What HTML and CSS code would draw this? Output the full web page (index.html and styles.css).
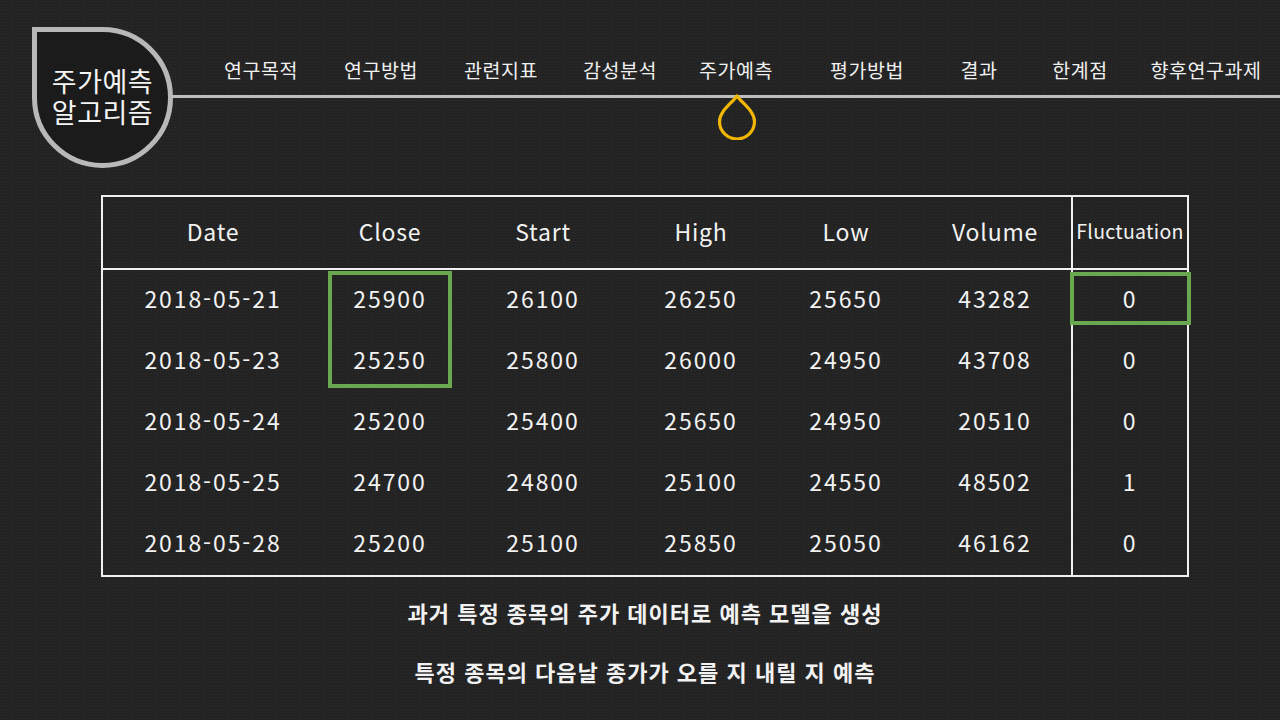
FILE: index.html
```html
<!DOCTYPE html>
<html lang="ko">
<head>
<meta charset="utf-8">
<link rel="stylesheet" href="styles.css">
</head>
<body>
<div class="header">
  <div class="badge"><div class="badge-text"><div>주가예측</div><div>알고리즘</div></div></div>
  <div class="nav-area">
    <nav class="nav">
      <div class="nav-item w1">연구목적</div>
      <div class="nav-item w2">연구방법</div>
      <div class="nav-item w3">관련지표</div>
      <div class="nav-item w4">감성분석</div>
      <div class="nav-item w5 active">주가예측
        <svg class="drop" width="40" height="46" viewBox="0 0 40 46"><path d="M20 2 C 25 9, 37.5 17, 37.5 27.5 A 17.5 17.5 0 0 1 2.5 27.5 C 2.5 17, 15 9, 20 2 Z" fill="none" stroke="#f2b705" stroke-width="3.2" stroke-linejoin="round"/></svg>
      </div>
      <div class="nav-item w6">평가방법</div>
      <div class="nav-item w7">결과</div>
      <div class="nav-item w8">한계점</div>
      <div class="nav-item w9">향후연구과제</div>
    </nav>
    <div class="rule"></div>
  </div>
</div>

<main class="main">
  <div class="table">
    <div class="row head">
      <div class="cell">Date</div><div class="cell">Close</div><div class="cell">Start</div><div class="cell">High</div><div class="cell">Low</div><div class="cell">Volume</div><div class="cell fl small">Fluctuation</div>
    </div>
    <div class="row">
      <div class="cell">2018-05-21</div><div class="cell">25900</div><div class="cell">26100</div><div class="cell">26250</div><div class="cell">25650</div><div class="cell">43282</div><div class="cell fl">0</div>
    </div>
    <div class="row">
      <div class="cell">2018-05-23</div><div class="cell">25250</div><div class="cell">25800</div><div class="cell">26000</div><div class="cell">24950</div><div class="cell">43708</div><div class="cell fl">0</div>
    </div>
    <div class="row">
      <div class="cell">2018-05-24</div><div class="cell">25200</div><div class="cell">25400</div><div class="cell">25650</div><div class="cell">24950</div><div class="cell">20510</div><div class="cell fl">0</div>
    </div>
    <div class="row">
      <div class="cell">2018-05-25</div><div class="cell">24700</div><div class="cell">24800</div><div class="cell">25100</div><div class="cell">24550</div><div class="cell">48502</div><div class="cell fl">1</div>
    </div>
    <div class="row">
      <div class="cell">2018-05-28</div><div class="cell">25200</div><div class="cell">25100</div><div class="cell">25850</div><div class="cell">25050</div><div class="cell">46162</div><div class="cell fl">0</div>
    </div>
    <div class="hl hl-close"></div>
    <div class="hl hl-fluct"></div>
  </div>
  <p class="caption">과거 특정 종목의 주가 데이터로 예측 모델을 생성</p>
  <p class="caption">특정 종목의 다음날 종가가 오를 지 내릴 지 예측</p>
</main>
</body>
</html>
```

FILE: styles.css
```css
* { box-sizing: border-box; }
html, body { margin: 0; padding: 0; }
body {
  width: 1280px;
  height: 720px;
  overflow: hidden;
  background-color: #232323;
  background-image: radial-gradient(circle, #2c2c2c 0.8px, transparent 1px);
  background-size: 3px 3px;
  color: #f2f2f2;
  font-family: "Noto Sans CJK KR", "Noto Sans", sans-serif;
}

.header {
  display: flex;
  padding: 27px 0 0 32px;
}
.badge {
  width: 141px;
  height: 141px;
  flex: none;
  border: 5px solid #b8b8b8;
  border-radius: 0 50% 50% 50%;
  background: #1b1b1b;
  display: flex;
  align-items: center;
  justify-content: center;
  text-align: center;
  color: #f4f4f4;
  position: relative;
  z-index: 1;
}
.badge-text {
  font-size: 27px;
  line-height: 31px;
  letter-spacing: 0.5px;
  margin-top: -4px;
}

.nav-area {
  flex: 1;
  display: flex;
  flex-direction: column;
  margin-left: -2px;
}
.nav {
  display: flex;
  height: 68px;
  padding: 31px 0 0 30px;
}
.nav-item {
  text-align: center;
  font-size: 19.5px;
  line-height: 24px;
  letter-spacing: 0.6px;
  color: #f0f0f0;
  position: relative;
}
.w1 { width: 120px; }
.w2 { width: 120px; }
.w3 { width: 120px; }
.w4 { width: 118px; }
.w5 { width: 114px; }
.w6 { width: 148px; }
.w7 { width: 76px; }
.w8 { width: 126px; }
.w9 { width: 126px; }

.drop {
  position: absolute;
  left: 50%;
  top: 36px;
  margin-left: -19px;
}
.rule {
  height: 3px;
  background: #bdbdbd;
}

.main {
  padding: 27px 0 0 101px;
  width: 1190px;
}
.table {
  position: relative;
  width: 1088px;
  border: 2px solid #f0f0f0;
}
.row {
  display: grid;
  grid-template-columns: 220px 134px 172px 144px 146px 152px 116px;
  height: 61px;
  align-items: stretch;
}
.row.head {
  height: 73px;
  border-bottom: 2px solid #f0f0f0;
}
.cell {
  display: flex;
  align-items: center;
  justify-content: center;
  font-size: 23px;
  letter-spacing: 1.9px;
  color: #f2f2f2;
  padding-bottom: 6px;
}
.row.head .cell { padding-bottom: 4px; letter-spacing: 0.8px; }
.cell.fl { border-left: 2px solid #f0f0f0; }
.row.head .cell.small { font-size: 19.5px; letter-spacing: 0.3px; }

.hl {
  position: absolute;
  border: 4px solid #6aa84f;
}
.hl-close {
  left: 225px;
  top: 74px;
  width: 124px;
  height: 117px;
}
.hl-fluct {
  left: 967px;
  top: 75px;
  width: 121px;
  height: 53px;
}

.caption {
  margin: 20px 0 0;
  width: 1088px;
  text-align: center;
  font-size: 22px;
  line-height: 30px;
  letter-spacing: 1px;
  font-weight: bold;
  color: #f2f2f2;
}
.caption + .caption { margin-top: 29px; }
```
